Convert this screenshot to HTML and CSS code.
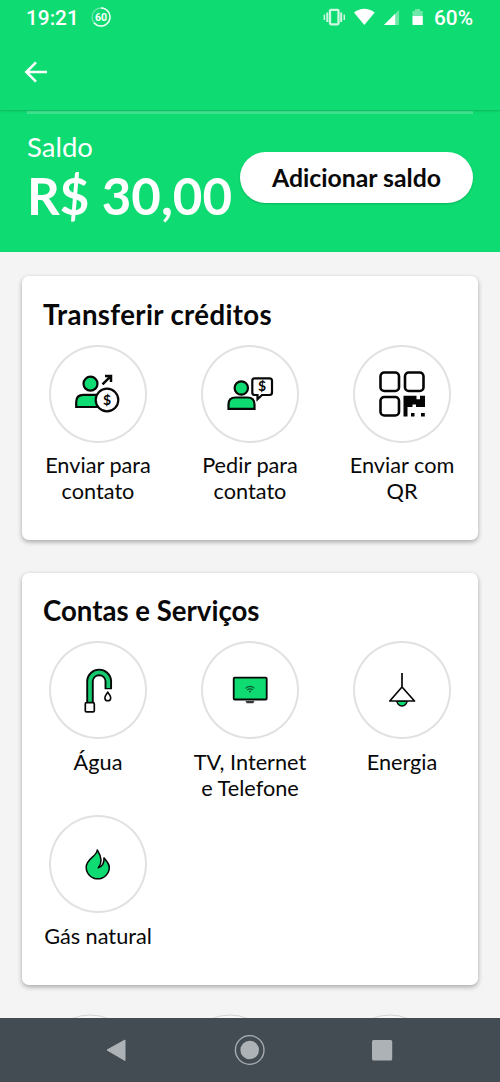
FILE: index.html
```html
<!DOCTYPE html>
<html lang="pt-BR">
<head>
<meta charset="utf-8">
<title>Saldo</title>
<link rel="stylesheet" href="styles.css">
</head>
<body>
<div class="screen">
  <header class="app-bar">
    <div class="status">
      <span class="clock">19:21</span>
      <svg class="timer" width="20" height="20" viewBox="0 0 20 20"><circle cx="10" cy="10" r="9" fill="none" stroke="#fff" stroke-opacity=".4" stroke-width="1.3"/><path d="M10 1A9 9 0 1 1 3 15.7" fill="none" stroke="#fff" stroke-opacity=".9" stroke-width="1.5"/><text x="10" y="13.8" class="timer-text">60</text></svg>
      <svg class="status-icons" width="106" height="20" viewBox="0 0 106 20">
        <g fill="none" stroke="#fff" stroke-opacity=".8"><rect x="7" y="1.8" width="8.5" height="14.5" rx="1" stroke-width="2.3"/><path d="M4.3 4.5v9.500M18.200 4.500v9.500" stroke-width="2"/><path d="M1.400 6.500v5.500M21.300 6.500v5.500" stroke-width="1.500"/></g>
        <path d="M31 4.500Q41.300-3 51.700 4.500L41.300 17Z" fill="#fff"/>
        <path d="M61 17L76 2V17Z" fill="#fff" opacity=".4"/><path d="M61 17L72.200 5.800V17Z" fill="#fff"/>
        <path d="M90 3h2V1h5v2h2.700v6H89.500V3Z" fill="#fff" opacity=".4"/><path d="M89.500 8h10.300v9H89.500Z" fill="#fff"/>
      </svg>
      <span class="percent">60%</span>
    </div>
    <svg class="back" width="24" height="24" viewBox="0 0 24 24"><path d="M12 2.300L2.300 12l9.700 9.700M2.800 12H23" fill="none" stroke="#fff" stroke-width="2.500"/></svg>
  </header>
  <section class="balance">
    <div class="rule"></div>
    <div class="balance-row">
      <div><div class="balance-label">Saldo</div><div class="amount">R$ 30,00</div></div>
      <button class="add">Adicionar saldo</button>
    </div>
  </section>
  <main class="content">
    <section class="card transfer">
      <h2>Transferir créditos</h2>
      <div class="grid">
        <div class="item">
          <svg class="icon" viewBox="0 0 98 98"><g fill="#0edb71" stroke="#050805" stroke-width="2.200"><circle cx="41.500" cy="38.700" r="7"/><path d="M27.200 62V57Q27.200 49.800 34.500 49.800H48Q55 49.800 55 57V62Z"/><circle cx="58" cy="55" r="11.300" fill="#fff"/><path d="M53.500 39.300L61.500 31.300M56 31H62V37" fill="none" stroke-width="2.500"/></g><text class="coin" x="58" y="60">$</text></svg>
          <span>Enviar para<br>contato</span>
        </div>
        <div class="item">
          <svg class="icon" viewBox="0 0 98 98"><g fill="#0edb71" stroke="#050805" stroke-width="2.200"><circle cx="40.300" cy="43" r="6.700"/><path d="M27.500 63.800V59.500Q27.500 52.500 34.500 52.500H46.500Q53.500 52.500 53.500 59.500V63.800Z"/><path d="M53.500 33.300H68.500Q71 33.300 71 35.800V47.500Q71 50 68.500 50H61L56.500 54.300V50H53.500Q51.300 50 51.300 47.500V35.800Q51.300 33.300 53.500 33.300Z" fill="#fff"/></g><text class="coin" x="61" y="46">$</text></svg>
          <span>Pedir para<br>contato</span>
        </div>
        <div class="item">
          <svg class="icon" viewBox="0 0 98 98"><g fill="none" stroke="#050505" stroke-width="2.600"><rect x="27.500" y="27.500" width="18.500" height="18.500" rx="3.800"/><rect x="52" y="27.500" width="18.500" height="18.500" rx="3.800"/><rect x="27.500" y="52" width="18.500" height="18.500" rx="3.800"/></g><path d="M50.500 50.800H63.500V54.300H67V50.800H72V62H63V59.500H59.500V62H54.500V71.500H50.500ZM58 68H61.500V71.500H58ZM68 68H71.800V71.500H68Z" fill="#050505"/></svg>
          <span>Enviar com<br>QR</span>
        </div>
      </div>
    </section>
    <section class="card services">
      <h2>Contas e Serviços</h2>
      <div class="grid">
        <div class="item">
          <svg class="icon" viewBox="0 0 98 98"><path d="M41 62V39.700A9.200 9.200 0 0 1 59.300 39.700V48.300" fill="none" stroke="#050805" stroke-width="7.500"/><path d="M41 61V39.700A9.200 9.200 0 0 1 59.300 39.700V47" fill="none" stroke="#16ca70" stroke-width="3.700"/><rect x="36.300" y="61.700" width="9" height="9.200" rx="1.200" fill="#fff" stroke="#050805" stroke-width="1.700"/><path d="M58.800 51.300Q55.900 55.200 55.900 56.900A2.900 2.900 0 0 0 61.700 56.900Q61.700 55.200 58.800 51.300Z" fill="#fff" stroke="#050805" stroke-width="1.600"/></svg>
          <span>Água</span>
        </div>
        <div class="item">
          <svg class="icon" viewBox="0 0 98 98"><rect x="32.700" y="36.700" width="33" height="21.800" rx="1" fill="#0edb71" stroke="#050805" stroke-width="1.800"/><path d="M44.500 60H53.500L52.300 62.300H45.700Z" fill="#343734"/><g fill="none" stroke="#075d32" stroke-width="1.100"><path d="M44.500 47.300Q49 43.500 53.500 47.300M46.200 49Q49 46.700 51.800 49"/></g><circle cx="49" cy="50.600" r="1" fill="#075d32"/></svg>
          <span>TV, Internet<br>e Telefone</span>
        </div>
        <div class="item">
          <svg class="icon" viewBox="0 0 98 98"><path d="M44 60A5 5 0 0 0 54 60Z" fill="#0edb71" stroke="#050805" stroke-width="1.500"/><path d="M49 32V46M49 46L36.800 60H61.500Z" fill="#fff" stroke="#050805" stroke-width="1.700" stroke-linejoin="round"/></svg>
          <span>Energia</span>
        </div>
        <div class="item">
          <svg class="icon" viewBox="0 0 98 98"><path d="M48.300 35C47.500 42 37.200 43.500 37.200 52.300A11.500 11.500 0 0 0 60.300 52.300C60.300 48 57 46 55 42.800C55.200 47.500 54 51.300 49.300 52.800C53.200 48.300 53 42.500 48.300 35Z" fill="#0edb71" stroke="#050805" stroke-width="1.500" stroke-linejoin="round"/></svg>
          <span>Gás natural</span>
        </div>
      </div>
    </section>
    <svg class="peek" width="500" height="5" viewBox="0 0 500 5"><g fill="#f7f7f7" stroke="#d5d5d5"><circle cx="90" cy="49" r="48"/><circle cx="230" cy="49" r="48"/><circle cx="390" cy="49" r="48"/></g></svg>
  </main>
  <nav class="nav">
    <svg width="500" height="64" viewBox="0 0 500 64"><g fill="#adb2b6"><path d="M107 32L125 22V42.500Z" stroke="#adb2b6" stroke-linejoin="round"/><circle cx="249.700" cy="32" r="9.300"/><circle cx="249.700" cy="32" r="14.300" fill="none" stroke="#adb2b6" stroke-width="1.300"/><rect x="372" y="22" width="20.200" height="20.500" rx="1.500"/></g></svg>
  </nav>
</div>
</body>
</html>
```
FILE: styles.css
```css
* { box-sizing: border-box; }
body { margin: 0; font-family: Lato, "Liberation Sans", sans-serif; color: #080808; background: #f4f4f4; }
.screen { width: 500px; height: 1082px; display: flex; flex-direction: column; overflow: hidden; }
.app-bar { height: 110px; flex: none; background: #0edb71; color: #fff; box-shadow: 0 1px 2px rgba(0,0,0,.18); z-index: 1; }
.status { height: 36px; display: flex; align-items: center; padding: 0 27px 0 26px; font: 500 20.800px/36px Roboto, sans-serif; }
.clock { width: 65px; }
.timer { margin-top: -2px; }
.timer-text { font: 700 10.500px Roboto, sans-serif; fill: #fff; text-anchor: middle; }
.status-icons { margin-left: auto; }
.percent { margin-left: 5px; }
.back { display: block; margin: 24px 0 0 24px; }
.balance { height: 142px; flex: none; padding: 1px 27px 0; background: #0edb71; color: #fff; }
.rule { height: 3px; background: #3fe28e; }
.balance-row { display: flex; justify-content: space-between; padding-top: 18px; white-space: nowrap; }
.balance-label { font-size: 27.500px; line-height: 30px; }
.amount { font-size: 51px; font-weight: 700; line-height: 60px; padding-top: 4px; }
.add { flex: none; width: 233px; height: 51px; margin-top: 20px; padding: 0; border: 0; border-radius: 26px; background: #fff; color: #080808; font: 700 24.800px Lato, sans-serif; box-shadow: 0 1px 2px rgba(0,0,0,.18); }
.content { flex: 1; min-height: 0; overflow: hidden; padding-top: 24px; background: #f4f4f4; }
.card { margin: 0 22px 32px; padding: 22px 0 0; border-radius: 7px; background: #fff; box-shadow: 0 2px 5px rgba(0,0,0,.32); }
.transfer { height: 264px; margin-bottom: 33px; }
.services { height: 412px; margin-bottom: 29px; padding-top: 21px; }
h2 { margin: 0 0 14px 21px; font-size: 27.600px; line-height: 33px; font-weight: 700; }
.transfer h2 { letter-spacing: .35px; }
.grid { display: grid; grid-template-columns: repeat(3, 152px); row-gap: 11px; }
.item { display: flex; flex-direction: column; align-items: center; min-height: 162px; font-size: 21.700px; line-height: 25.500px; text-align: center; white-space: nowrap; }
.icon { width: 98px; height: 98px; box-shadow: inset 0 0 0 2px #e1e1e1; border-radius: 50%; margin-bottom: 10px; }
.services .item { min-height: 163px; }
.services .icon { margin-bottom: 11px; }
.coin { font: 700 14px Lato, sans-serif; text-anchor: middle; fill: #080808; }
.peek { display: block; }
.nav { height: 64px; flex: none; background: #444c53; }
.nav svg { display: block; }
```
